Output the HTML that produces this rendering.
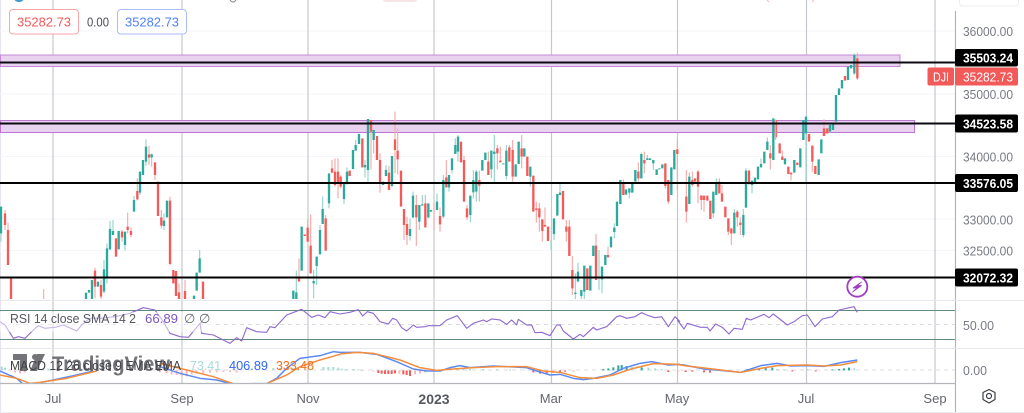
<!DOCTYPE html>
<html><head><meta charset="utf-8"><style>
html,body{margin:0;padding:0;background:#fff;width:1024px;height:413px;overflow:hidden}
svg{display:block;filter:blur(.35px)}
text{font-family:"Liberation Sans",sans-serif}
</style></head><body>
<svg width="1024" height="413" viewBox="0 0 1024 413" xmlns="http://www.w3.org/2000/svg">
<defs><clipPath id="pc"><rect x="0" y="0" width="955" height="299"/></clipPath><clipPath id="mc"><rect x="0" y="348" width="955" height="35"/></clipPath></defs>
<rect width="1024" height="413" fill="#fff"/>
<rect x="0" y="0" width="1" height="413" fill="#e6e4f4"/>
<path d="M0 31H955M0 94H955M0 156.500H955M0 219H955M0 250.500H955" stroke="#f5f6fa" fill="none"/>
<path d="M53 0V383M182 0V383M308 0V383M434 0V383M551.500 0V383M677.500 0V383M806.500 0V383M935 0V383" stroke="#c6c7cd" stroke-width="1.200" fill="none"/>
<path d="M0 300.500H955M0 348.500H955" stroke="#e6e7ee" fill="none"/>
<!-- bands -->
<rect x=".5" y="55" width="899.500" height="11.500" fill="#e8d2f0" stroke="#c689d9"/>
<rect x=".5" y="120.500" width="914" height="12" fill="#e8d2f0" stroke="#bd75d3"/>
<!-- candles -->
<g clip-path="url(#pc)" fill="none">
<g transform="translate(0,130) scale(.33333)">
<path stroke="#f6a9a7" stroke-width="3.400" d="M15 240V300M24 278V405M131 477V520M285 413V505M303 450V510M348 325V380M366 300V335M383 248V310M393 292V322M412 145V212M447 48V105M465 97V150M484 240V295M510 200V405M520 420V460M555 450V520M537 460V520M897 385V455M923 268V335M932 253V430M977 255V362M1005 85V170M1014 85V205M996 90V130"/>
<path stroke="#93d3cd" stroke-width="3.400" d="M3 230V335M276 450V520M312 390V490M321 340V460M330 272V360M339 270V310M375 305V362M402 198V245M420 125V195M438 28V108M455 70V110M492 250V300M599 360V428M889 422V520M941 420V505M950 380V465M960 285V373M968 200V282M987 130V235"/>
<path stroke="#f55a58" stroke-width="7" d="M15 250V285M24 300V405M33 445V520M285 422V470M303 465V500M348 325V380M366 305V322M383 290V300M393 303V315M412 183V208M447 73V83M465 97V135M474 155V258M484 262V287M510 212V402M520 420V460M528 423V498M537 487V520M555 483V520M609 455V520M897 445V455M914 313V318M923 293V335M932 347V430M977 265V362M996 115V128M1005 125V165M1014 125V160"/>
<path stroke="#2aa99c" stroke-width="7" d="M3 230V310M258 488V520M267 480V488M276 450V520M294 455V470M312 418V485M321 355V445M330 297V358M339 303V315M356 303V358M375 305V345M402 210V245M420 125V188M429 90V135M438 50V95M455 73V82M492 272V288M501 212V262M582 497V520M590 428V482M599 385V428M880 482V520M889 487V520M905 290V422M941 453V460M950 380V408M960 300V373M968 237V282M987 130V220"/>
</g>
<g transform="translate(340,130) scale(.33333)">
<path stroke="#f6a9a7" stroke-width="3.400" d="M2 135V175M93 -30V118M120 70V188M147 108V180M165 -55V130M173 -5V133M192 237V330M201 260V345M229 195V348M256 195V292M282 220V300M300 232V305M319 90V172M372 78V215M381 225V270M418 122V215M445 65V135M472 45V118M481 50V97M508 45V95M518 30V155M545 15V115M589 215V278M598 218V305M607 268V335M615 232V290M679 270V335M688 270V378M697 378V495M768 312V450M804 350V382M850 148V195M895 97V155M913 65V130M976 100V175M985 150V222M1012 30V180"/>
<path stroke="#93d3cd" stroke-width="3.400" d="M12 160V222M21 112V165M47 30V62M75 90V142M84 -33V157M101 0V70M138 105V138M156 78V172M210 265V332M219 185V263M238 225V300M247 195V227M291 190V240M310 135V265M327 135V185M336 85V130M346 25V72M354 15V95M391 197V277M400 120V205M409 120V215M454 62V145M463 15V157M499 45V148M571 110V170M633 330V360M642 265V330M660 162V195M706 430V510M714 398V455M724 480V510M733 407V510M777 360V480M786 410V490M823 280V325M868 175V205M904 68V145M922 75V90M940 90V120M994 112V195"/>
<path stroke="#f55a58" stroke-width="7" d="M2 140V170M29 122V138M67 25V112M93 -30V5M111 18V90M120 90V158M147 128V180M165 28V60M173 62V88M183 122V230M192 237V285M201 282V315M229 225V262M256 220V292M300 258V283M319 142V172M363 35V97M372 90V215M381 235V262M418 150V167M445 95V135M472 55V70M481 92V97M508 52V95M518 60V140M545 55V80M562 80V138M580 137V245M589 235V240M598 235V262M607 268V303M615 285V290M624 290V333M669 183V268M679 290V305M688 290V378M697 420V475M742 415V480M768 347V450M804 375V382M850 160V195M895 125V145M913 90V100M976 100V168M985 150V215M1012 58V72"/>
<path stroke="#2aa99c" stroke-width="7" d="M12 160V207M21 125V157M39 60V117M47 45V62M57 12V42M75 105V112M84 -33V120M101 0V30M129 155V165M138 120V138M156 78V168M210 297V318M219 197V263M238 225V275M247 223V227M265 220V263M273 240V245M291 215V240M310 150V260M327 135V172M336 85V120M346 45V72M354 20V65M391 197V255M400 150V187M409 125V185M427 90V122M436 68V90M454 62V118M463 65V72M490 100V103M499 62V138M527 103V140M536 35V102M553 55V80M571 110V140M642 265V312M652 192V257M660 188V195M706 488V492M714 425V455M724 480V498M733 407V485M751 407V482M760 347V378M786 410V448M796 375V405M813 320V352M823 293V306M831 215V288M841 150V222M858 178V194M868 175V188M877 157V188M886 120V155M904 72V145M922 85V90M930 85V90M940 90V100M950 118V135M958 115V118M967 103V115M994 112V195M1003 60V118"/>
</g>
<g transform="translate(684,130) scale(.33333)">
<path stroke="#f6a9a7" stroke-width="3.400" d="M7 120V278M25 125V170M42 120V220M52 195V240M60 197V245M106 145V190M114 165V215M133 265V315M142 295V345M160 240V290M169 262V315M195 120V165M259 45V118M295 62V90M321 128V152M385 47V125"/>
<path stroke="#93d3cd" stroke-width="3.400" d="M16 127V222M88 185V262M97 145V195M151 237V310M178 237V322M186 115V233M204 152V190M231 85V112M250 22V60M366 -10V155"/>
<path stroke="#f55a58" stroke-width="7" d="M7 200V245M25 150V165M33 145V155M42 125V170M52 197V210M60 197V210M70 197V212M79 212V267M106 155V190M114 190V215M124 230V262M133 265V305M142 295V310M160 245V262M169 278V285M195 122V160M259 70V85M276 -30V22M287 40V70M295 80V90M313 110V132M321 128V133M340 98V105M375 12V35M385 47V95M394 108V132M420 5V18M430 0V10"/>
<path stroke="#2aa99c" stroke-width="7" d="M16 140V222M88 185V250M97 160V195M151 248V310M178 255V315M186 122V233M204 152V165M213 143V162M222 110V148M231 102V112M241 65V100M250 35V60M268 -35V90M303 85V103M331 90V128M349 55V112M358 -30V30M366 -40V10M404 88V135M412 28V70"/>
</g>
<g transform="translate(684,0) scale(.33333)">
<path stroke="#f6a9a7" stroke-width="3.400" d="M275 358V420M420 358V405M520 158V240"/>
<path stroke="#93d3cd" stroke-width="3.400" d="M511 160V225M438 370V400"/>
<path stroke="#f55a58" stroke-width="7" d="M375 405V420M420 385V405M430 385V400M483 228V242M520 175V235"/>
<path stroke="#2aa99c" stroke-width="7" d="M438 375V395M447 370V390M456 285V365M465 265V285M474 240V265M492 200V240M501 195V205M511 165V220"/>
</g>
</g>
<!-- level lines -->
<path d="M0 62.500H955M0 123.500H955" stroke="#0d0a12" stroke-width="2"/>
<path d="M0 183H955M0 277.500H955" stroke="#000" stroke-width="2"/>
<!-- RSI -->
<path d="M0 310.500H955M0 339.500H955" stroke="#5f8a7c" stroke-width="1"/>
<path d="M0 324.500H955M0 370H955" stroke="#dcdde2" stroke-dasharray="4 4" fill="none"/>
<g fill="none" stroke="#8f6bd0" stroke-width="3.400" stroke-linejoin="round">
<path transform="translate(0,295) scale(.33333)" d="M0 80L15 90L40 130L55 125L75 130L100 105L115 92L135 100L165 97L190 90L230 108L245 90L270 70L300 70L345 65L390 55L430 38L465 45L490 80L510 115L540 125L565 127L600 85L605 115L640 120L690 145L710 128L725 138L740 98L770 110L800 112L810 95L825 98L860 60L905 43L935 67L955 60L975 68L990 50L1020 57"/>
<path transform="translate(340,295) scale(.33333)" d="M0 57L30 52L55 44L68 63L82 50L100 55L120 80L145 87L158 70L170 75L185 98L200 108L220 90L230 97L255 95L265 92L300 92L320 75L352 62L380 100L400 85L430 75L440 80L455 72L480 75L500 88L515 75L530 90L535 73L560 90L575 90L585 113L605 112L630 122L650 90L660 90L670 108L700 132L720 118L730 125L760 97L770 105L800 95L830 65L840 62L860 70L885 65L905 53L920 60L945 68L965 65L985 95L1005 65L1020 80"/>
<path transform="translate(684,295) scale(.33333)" d="M-20 75L0 102L10 85L50 97L70 97L78 108L95 87L115 97L135 117L150 100L175 103L187 70L200 75L240 58L255 68L268 57L310 90L330 80L355 62L370 60L393 95L415 72L445 65L465 45L510 35L520 52"/>
</g>
<rect x="0" y="312" width="212" height="20" fill="#fff" opacity=".5"/>
<!-- MACD -->
<g clip-path="url(#mc)" fill="none">
<g stroke-width="6">
<path stroke="#f7b9b6" transform="translate(0,295) scale(.33333)" d="M45 226V232M60 226V235M75 226V232M480 226V232M500 226V234M515 226V238M530 226V240M545 226V242M560 226V244M575 226V238M590 226V236M610 226V234M630 226V233M650 226V232M670 226V231M690 226V231M710 226V232"/>
<path stroke="#a6dcd6" transform="translate(0,295) scale(.33333)" d="M5 225V215M15 225V218M130 226V221M145 226V221M820 226V219M840 226V219M860 226V218M880 226V218M970 226V216M985 226V216M1000 226V216M1015 226V218"/>
<path stroke="#f55a58" transform="translate(340,295) scale(.33333)" d="M115 226V234M125 226V236M135 226V237M145 226V237M155 226V237M165 226V235M190 226V238M200 226V240M210 226V243M580 226V232M600 226V236M620 226V235M660 226V231M675 226V230M985 226V231"/>
<path stroke="#f7b9b6" transform="translate(340,295) scale(.33333)" d="M65 226V228M100 226V229M178 226V236M225 226V238M240 226V235M255 226V232M640 226V234M700 226V230M1015 226V230"/>
<path stroke="#2aa99c" transform="translate(340,295) scale(.33333)" d="M790 226V222M805 226V220M820 226V217M835 226V211M845 226V210M860 226V213M905 226V217"/>
<path stroke="#a6dcd6" transform="translate(340,295) scale(.33333)" d="M5 226V221M20 226V222M40 226V222M55 226V223M350 226V219M370 226V221M390 226V222M430 226V222M470 226V222M510 226V223M875 226V216M925 226V218M945 226V220M965 226V222"/>
<path stroke="#f55a58" transform="translate(684,295) scale(.33333)" d="M5 226V231M25 226V230M60 226V232M78 226V233M140 226V231M325 226V229M395 226V229"/>
<path stroke="#2aa99c" transform="translate(684,295) scale(.33333)" d="M190 226V222M205 226V221M225 226V220M245 226V218M265 226V218M445 226V223M465 226V222M480 226V220M495 226V218"/>
<path stroke="#a6dcd6" transform="translate(684,295) scale(.33333)" d="M280 226V222M300 226V223M370 226V222M510 226V220"/>
</g>
<g stroke="#5b8af5" stroke-width="4.500" stroke-linejoin="round">
<path transform="translate(0,295) scale(.33333)" d="M0 228L50 250L70 268L110 265L160 255L230 240L280 228M480 215L540 235L600 250L650 255L700 268M760 266L800 266L830 250L860 220L900 190L960 182L1000 170L1020 172"/>
<path transform="translate(340,295) scale(.33333)" d="M0 172L60 172L110 178L170 200L220 222L260 228L300 228L330 218L360 212L390 218L460 213L560 218L590 228L630 240L660 238L700 250L730 254L760 250L810 240L850 220L900 205L935 200L985 210L1020 208"/>
<path transform="translate(684,295) scale(.33333)" d="M-20 208L0 210L60 222L130 228L170 232L230 212L280 205L320 213L370 212L420 214L470 203L520 195"/>
</g>
<g stroke="#f58d3c" stroke-width="4.500" stroke-linejoin="round">
<path transform="translate(0,295) scale(.33333)" d="M0 240L50 250L90 265L120 262L200 250L290 228M480 205L560 225L640 245L700 266M800 266L860 240L900 215L960 195L1020 178"/>
<path transform="translate(340,295) scale(.33333)" d="M0 177L50 172L100 175L180 195L240 218L290 226L340 222L400 218L470 215L560 215L610 228L660 232L720 248L770 250L820 240L880 220L940 206L1020 208"/>
<path transform="translate(684,295) scale(.33333)" d="M-20 208L0 212L70 220L170 232L230 220L280 212L370 210L420 213L470 210L520 200"/>
</g>
</g>
<!-- watermark -->
<g opacity=".72" fill="#3f4045">
<path d="M13 354H27V371H20V360H13ZM35 354A3 3 0 1 1 35 360A3 3 0 1 1 35 354ZM37 354H45L37 371H30Z"/>
<text x="52" y="371" font-size="21" font-weight="bold" textLength="118" lengthAdjust="spacingAndGlyphs">TradingView</text>
</g>
<!-- legends -->
<text x="10" y="323" font-size="13" fill="#55585f" textLength="126" lengthAdjust="spacingAndGlyphs">RSI 14 close SMA 14 2</text>
<text x="145" y="323" font-size="13" fill="#7e57c2" textLength="33" lengthAdjust="spacingAndGlyphs">66.89</text>
<text x="184" y="323" font-size="13" fill="#666a72">∅</text>
<text x="199" y="323" font-size="13" fill="#666a72">∅</text>
<text x="10" y="370" font-size="12.500" fill="#3f4147" textLength="171" lengthAdjust="spacingAndGlyphs">MACD 12 26 close 9 EMA EMA</text>
<text x="190" y="370" font-size="13" fill="#a6dcd6" textLength="31" lengthAdjust="spacingAndGlyphs">73.41</text>
<text x="229" y="370" font-size="13" fill="#2f68f0" textLength="39" lengthAdjust="spacingAndGlyphs">406.89</text>
<text x="276" y="370" font-size="13" fill="#f5701a" textLength="38" lengthAdjust="spacingAndGlyphs">333.48</text>
<!-- top legend -->
<rect x="9.500" y="9.500" width="69" height="24.500" rx="3.500" fill="#fff" stroke="#f8a5a5"/>
<text x="17" y="26.500" font-size="13" fill="#f2595a" textLength="54" lengthAdjust="spacingAndGlyphs">35282.73</text>
<text x="87" y="26.500" font-size="13" fill="#4b4e55" textLength="22" lengthAdjust="spacingAndGlyphs">0.00</text>
<rect x="117.500" y="9.500" width="69" height="24.500" rx="3.500" fill="#fff" stroke="#a9bdf8"/>
<text x="125" y="26.500" font-size="13" fill="#4f80f6" textLength="54" lengthAdjust="spacingAndGlyphs">35282.73</text>
<circle cx="19" cy="-4" r="6" fill="#3d9ad0"/>
<path d="M230 0Q233 4 236 0" stroke="#888" fill="none"/>
<rect x="383" y="-3" width="34" height="5" rx="3" fill="#f8e3e5"/>
<path d="M767 0L769 2M814 0L812 2" stroke="#f3b9b6" fill="none"/>
<rect x="959.500" y="-6" width="59" height="12" rx="3" fill="#fff" stroke="#ececf2"/>
<!-- axes -->
<path d="M955.500 11V413" stroke="#b3b4ba" stroke-width="1.200"/>
<path d="M0 383.500H955" stroke="#b5b6bc" stroke-width="1.200"/>
<path d="M955 348.500H1024M955 300.500H1024" stroke="#e9eaf0"/>
<path d="M0 412.500H1024" stroke="#eceef4"/>
<g font-size="13" fill="#787b83">
<text x="963" y="36" textLength="50" lengthAdjust="spacingAndGlyphs">36000.00</text>
<text x="963" y="99" textLength="50" lengthAdjust="spacingAndGlyphs">35000.00</text>
<text x="963" y="161.500" textLength="50" lengthAdjust="spacingAndGlyphs">34000.00</text>
<text x="963" y="224.500" textLength="50" lengthAdjust="spacingAndGlyphs">33000.00</text>
<text x="963" y="255.500" textLength="50" lengthAdjust="spacingAndGlyphs">32500.00</text>
<text x="963" y="330" textLength="31" lengthAdjust="spacingAndGlyphs">50.00</text>
<text x="963" y="375" textLength="24" lengthAdjust="spacingAndGlyphs">0.00</text>
</g>
<g fill="#000">
<rect x="955" y="49" width="63" height="17.500" rx="2"/>
<rect x="955" y="114.500" width="63" height="18" rx="2"/>
<rect x="955" y="174" width="63" height="18" rx="2"/>
<rect x="955" y="268.500" width="63" height="18" rx="2"/>
</g>
<rect x="927.500" y="67.500" width="26.500" height="18" rx="2" fill="#f25a5a"/>
<rect x="955" y="67.500" width="63" height="18" rx="2" fill="#f25a5a"/>
<g font-size="13" fill="#fff" font-weight="bold">
<text x="963" y="62.500" textLength="50" lengthAdjust="spacingAndGlyphs">35503.24</text>
<text x="963" y="128.500" textLength="50" lengthAdjust="spacingAndGlyphs">34523.58</text>
<text x="963" y="188" textLength="50" lengthAdjust="spacingAndGlyphs">33576.05</text>
<text x="963" y="282.500" textLength="50" lengthAdjust="spacingAndGlyphs">32072.32</text>
</g>
<g font-size="13" fill="#fff">
<text x="963" y="81.500" textLength="50" lengthAdjust="spacingAndGlyphs">35282.73</text>
<text x="933" y="81.500" textLength="16" lengthAdjust="spacingAndGlyphs">DJI</text>
</g>
<!-- lightning -->
<circle cx="857.300" cy="286.700" r="10" fill="#fff" stroke="#a03cc0" stroke-width="1.800"/>
<path d="M861.500 282L853 288H857L852.500 292L861.500 285.500H857.500Z" fill="#a03cc0" stroke="#a03cc0" stroke-width=".8" stroke-linejoin="round"/>
<!-- time axis -->
<g font-size="13" fill="#63666e" text-anchor="middle">
<text x="53" y="403">Jul</text>
<text x="182" y="403">Sep</text>
<text x="308" y="403">Nov</text>
<text x="434" y="404" font-size="14" font-weight="bold" fill="#55585f">2023</text>
<text x="551" y="403">Mar</text>
<text x="677" y="403">May</text>
<text x="806" y="403">Jul</text>
<text x="935" y="403">Sep</text>
</g>
<path d="M983 392L989 389L995 392V399L989 402.500L983 399Z" transform="translate(0,.5)" fill="none" stroke="#3c3f46" stroke-width="1.200" stroke-linejoin="round"/>
<circle cx="989" cy="396" r="2.500" fill="none" stroke="#3c3f46" stroke-width="1.200"/>
</svg>
</body></html>
